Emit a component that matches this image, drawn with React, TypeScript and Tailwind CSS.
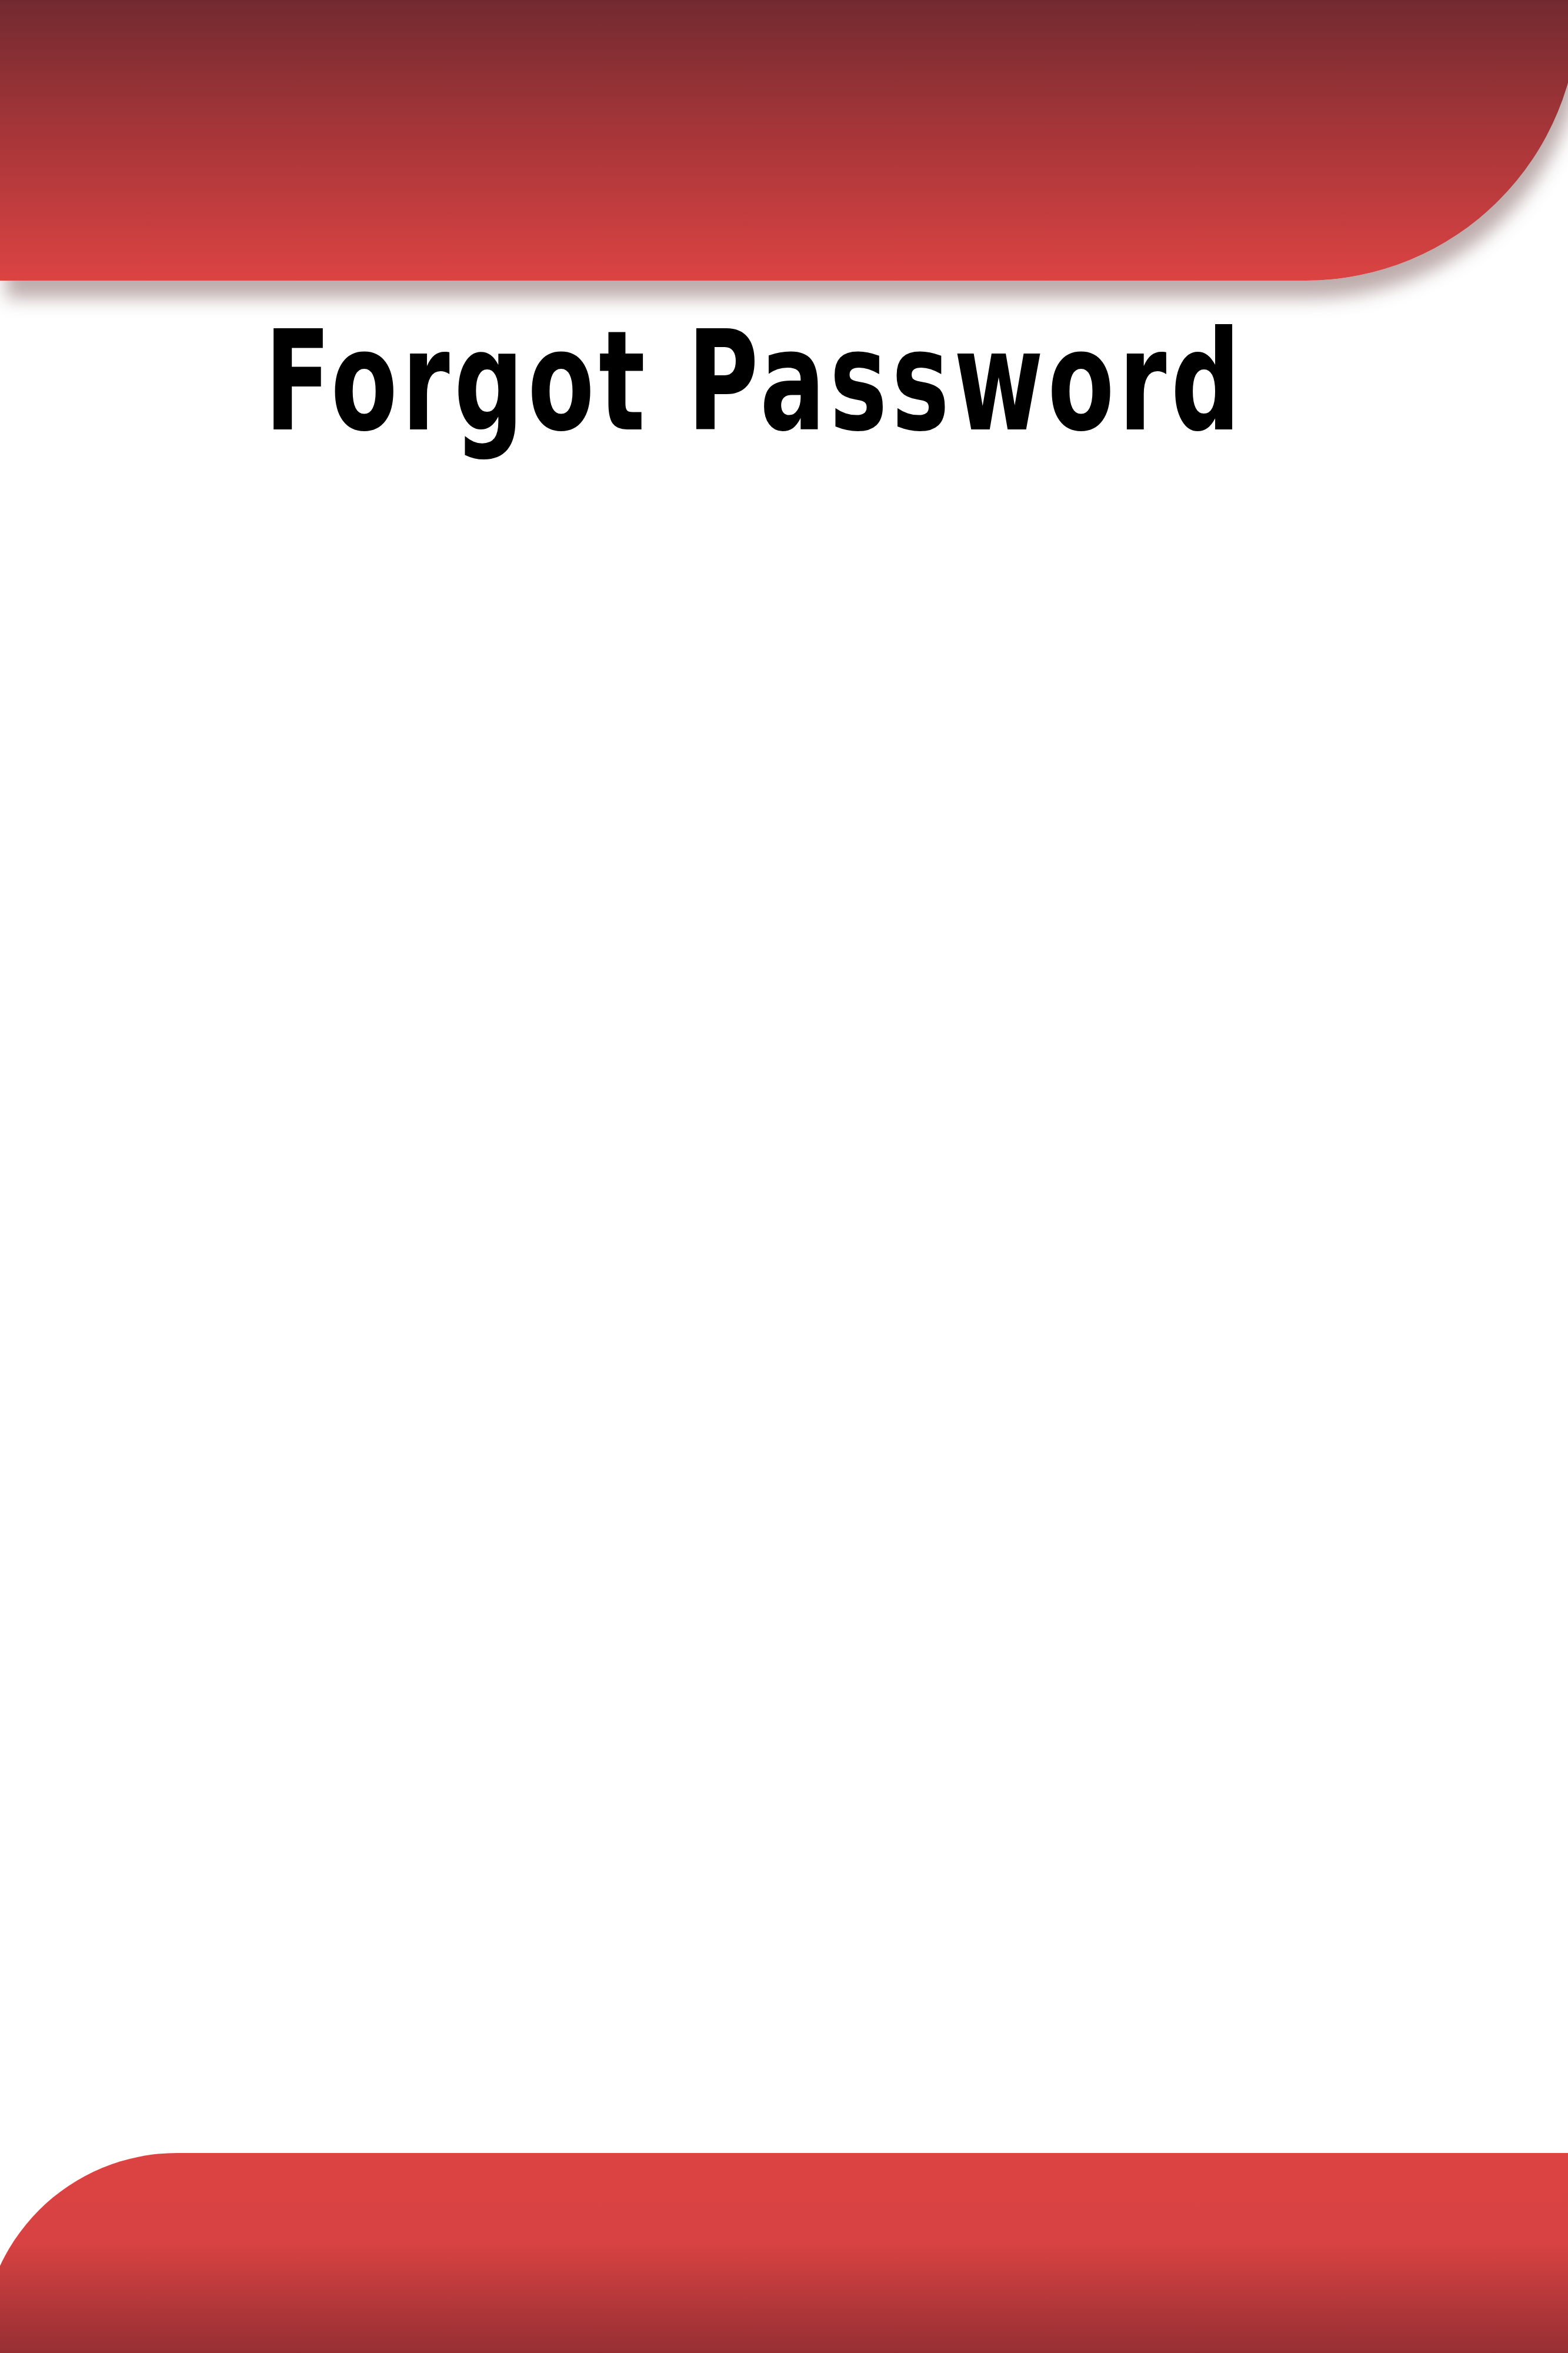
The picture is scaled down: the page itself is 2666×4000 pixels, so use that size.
export default function App() {
  return (
    <div className="flex min-h-[4000px] flex-col overflow-hidden bg-white">
      {/* Top banner */}
      <header className="relative z-10 h-[477px] w-[calc(100%+18px)] rounded-br-[464px] bg-gradient-to-b from-[#722a30] via-[#a93639] to-[#dc4343] shadow-[10px_30px_30px_rgba(110,70,70,0.45)]" />

      {/* Title */}
      <div className="mt-[54px] flex justify-center pr-[100px]">
        <h1 className="origin-center scale-x-[0.78] font-['DejaVu_Sans_Condensed','DejaVu_Sans',sans-serif] text-[235px] font-bold leading-none tracking-[0.04em] text-black whitespace-nowrap">
          Forgot Password
        </h1>
      </div>

      <div className="flex-1" />

      {/* Bottom banner */}
      <footer className="-ml-[31px] h-[340px] w-[calc(100%+31px)] rounded-tl-[332px] bg-gradient-to-b from-[#dc4343] via-[#d84242] via-45% to-[#962f33]" />
    </div>
  )
}
